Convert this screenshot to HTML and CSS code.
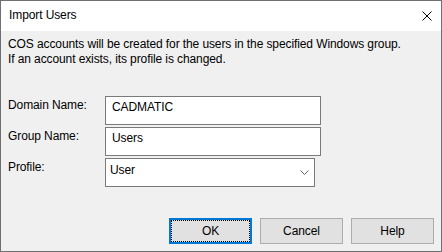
FILE: index.html
```html
<!DOCTYPE html>
<html lang="en">
<head>
  <meta charset="UTF-8">
  <meta name="viewport" content="width=device-width, initial-scale=1.0">
  <title>Import Users</title>
  <link rel="stylesheet" href="styles.css">
</head>
<body>
  <div class="window">
    <header class="titlebar">
      <span class="title">Import Users</span>
      <span class="close">
        <svg width="10" height="10" viewBox="0 0 10 10">
          <path d="M0.5 0.5 L9.5 9.5 M9.5 0.5 L0.5 9.5" stroke="#000" stroke-width="1" fill="none"/>
        </svg>
      </span>
    </header>
    <main class="client">
      <p class="intro">COS accounts will be created for the users in the specified Windows group.<br>If an account exists, its profile is changed.</p>
      <div class="form">
        <label class="label">Domain Name:</label>
        <div class="field">CADMATIC</div>
        <label class="label">Group Name:</label>
        <div class="field">Users</div>
        <label class="label">Profile:</label>
        <div class="field combo">
          <span>User</span>
          <svg width="9" height="5" viewBox="0 0 9 5">
            <path d="M0.5 0.5 L4.5 4.5 L8.5 0.5" stroke="#606060" stroke-width="1" fill="none"/>
          </svg>
        </div>
      </div>
      <div class="buttons">
        <button class="btn default"><span class="focus">OK</span></button>
        <button class="btn">Cancel</button>
        <button class="btn">Help</button>
      </div>
    </main>
  </div>
</body>
</html>
```

FILE: styles.css
```css
body {
  margin: 0;
  font-family: "Segoe UI", "Liberation Sans", Arial, sans-serif;
  font-size: 12px;
  letter-spacing: -0.1px;
  color: #000;
}
.window {
  width: 442px;
  height: 252px;
  box-sizing: border-box;
  border: 1px solid #707070;
  display: flex;
  flex-direction: column;
  background: #f0f0f0;
}
.titlebar {
  height: 30px;
  background: #fff;
  display: flex;
  align-items: center;
  justify-content: space-between;
  padding: 0 9px 0 8px;
}
.title {
  line-height: 15px;
  padding-bottom: 1px;
}
.close {
  display: flex;
  margin-top: -1px;
}
.client {
  flex: 1;
  display: flex;
  flex-direction: column;
  padding: 6px 7px 7px 7px;
}
.intro {
  margin: 0;
  line-height: 15px;
}
.form {
  margin-top: 29px;
  display: grid;
  grid-template-columns: 97px 216px;
  row-gap: 2px;
}
.label {
  padding-top: 2px;
  line-height: 15px;
}
.field {
  height: 29px;
  box-sizing: border-box;
  border: 1px solid #7a7a7a;
  background: #fff;
  padding: 3px 6px 0 6px;
  line-height: 15px;
}
.combo {
  width: 210px;
  display: flex;
  justify-content: space-between;
  align-items: flex-start;
  padding: 4px 5px 0 4px;
}
.combo svg {
  margin-top: 7px;
}
.buttons {
  margin-top: auto;
  display: flex;
  justify-content: flex-end;
  gap: 8px;
}
.btn {
  width: 83px;
  height: 26px;
  box-sizing: border-box;
  border: 1px solid #adadad;
  background: #e1e1e1;
  font: inherit;
  letter-spacing: inherit;
  color: #000;
  padding: 0;
  display: flex;
  align-items: center;
  justify-content: center;
}
.btn.default {
  border: 2px solid #0078d7;
  padding: 0;
}
.focus {
  align-self: stretch;
  flex: 1;
  display: flex;
  align-items: center;
  justify-content: center;
  border: 1px dotted #000;
}
```
